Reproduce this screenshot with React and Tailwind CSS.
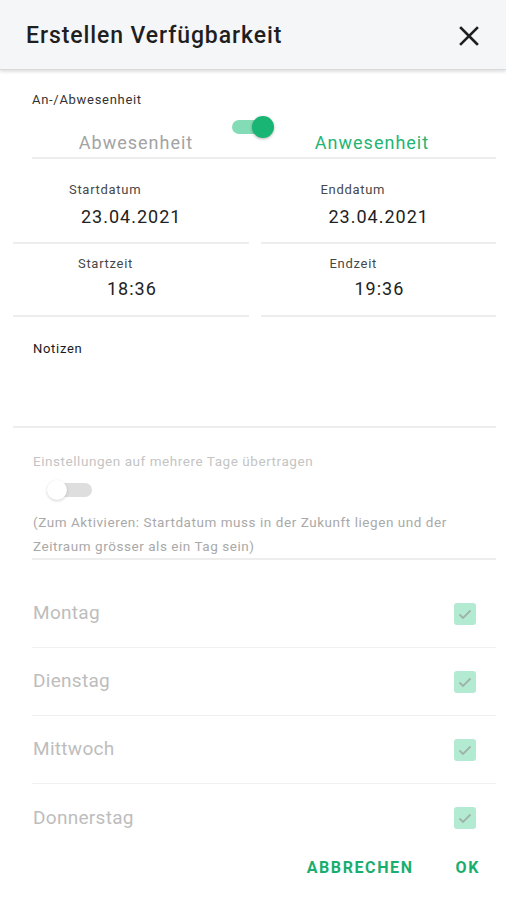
const days = ['Montag', 'Dienstag', 'Mittwoch', 'Donnerstag']

const CloseIcon = () => (
  <svg width="20" height="20" viewBox="0 0 20 20" fill="none">
    <path d="M2 2L18 18M18 2L2 18" stroke="#1f1f1f" strokeWidth="2.6" strokeLinecap="square" />
  </svg>
)

const Check = () => (
  <div className="w-[22px] h-[22px] rounded-[3px] bg-[#b3ead2] flex items-center justify-center">
    <svg width="16" height="16" viewBox="0 0 16 16" fill="none">
      <path d="M2.5 8.5L6 12L13.5 4.5" stroke="#9fb3a9" strokeWidth="1.8" />
    </svg>
  </div>
)

const DateField = ({ label, value, labelPad, valuePad, top, gap, bottom }) => (
  <div className={`border-b-2 border-[#ededed] ${top} ${bottom}`}>
    <div className={`text-[13px] leading-[16px] tracking-[0.7px] text-[#474747] ${labelPad}`}>{label}</div>
    <div className={`text-[18px] leading-[20px] tracking-[1px] text-[#222] ${valuePad} ${gap}`}>{value}</div>
  </div>
)

export default function App() {
  return (
    <div className="h-[900px] w-[506px] bg-white flex flex-col overflow-hidden" style={{ fontFamily: 'Roboto, "Liberation Sans", sans-serif' }}>
      {/* Header */}
      <div className="h-[70px] shrink-0 bg-[#f5f6f8] flex items-center justify-between pl-[26px] pr-[27px] pt-[3px] border-b border-[#d9d9d9] shadow-[0_2px_3px_rgba(0,0,0,0.12)] relative z-10">
        <h1 className="text-[23px] font-medium text-[#1f1f1f] tracking-[0.9px]">Erstellen Verfügbarkeit</h1>
        <CloseIcon />
      </div>

      <div className="flex-1 overflow-hidden">
        {/* An-/Abwesenheit */}
        <div className="ml-[32px] mr-[10px] pt-[22px] pb-[4px] border-b-2 border-[#ededed]">
          <div className="text-[13px] leading-[16px] tracking-[0.7px] text-[#333]">An-/Abwesenheit</div>
          <div className="grid grid-cols-[208px_8px_1fr] mt-[8px]">
            <div className="text-center text-[18px] leading-[20px] tracking-[1px] text-[#a3a3a3] mt-[17px]">Abwesenheit</div>
            <div className="flex justify-center">
              <div className="relative w-[38px] h-[22px] ml-[14px] shrink-0">
                <div className="absolute left-0 top-[4px] w-[36px] h-[14px] rounded-full bg-[#84dcb6]" />
                <div className="absolute right-[-4px] top-0 w-[22px] h-[22px] rounded-full bg-[#18b574] shadow-[0_1px_3px_rgba(0,0,0,0.3)]" />
              </div>
            </div>
            <div className="text-center text-[18px] leading-[20px] tracking-[1px] text-[#1fb574] mt-[17px]">Anwesenheit</div>
          </div>
        </div>

        {/* Dates and times */}
        <div className="grid grid-cols-2 gap-x-[12px] ml-[13px] mr-[10px]">
          <DateField label="Startdatum" value="23.04.2021" labelPad="pl-[56px]" valuePad="pl-[68px]" top="pt-[23px]" gap="mt-[9px]" bottom="pb-[15px]" />
          <DateField label="Enddatum" value="23.04.2021" labelPad="pl-[60px]" valuePad="pl-[68px]" top="pt-[23px]" gap="mt-[9px]" bottom="pb-[15px]" />
          <DateField label="Startzeit" value="18:36" labelPad="pl-[65px]" valuePad="pl-[94px]" top="pt-[12px]" gap="mt-[7px]" bottom="pb-[16px]" />
          <DateField label="Endzeit" value="19:36" labelPad="pl-[69px]" valuePad="pl-[94px]" top="pt-[12px]" gap="mt-[7px]" bottom="pb-[16px]" />
        </div>

        {/* Notizen */}
        <div className="ml-[13px] mr-[10px] pt-[24px] pb-[69px] border-b-2 border-[#ededed]">
          <div className="text-[13px] leading-[16px] tracking-[0.7px] text-[#1a1a1a] pl-[20px]">Notizen</div>
        </div>

        {/* Multi-day */}
        <div className="ml-[32px] mr-[10px] pt-[25px] border-b-2 border-[#ededed]">
          <div className="text-[13.5px] leading-[16px] tracking-[0.55px] text-[#c4c4c4] pl-[1px]">Einstellungen auf mehrere Tage übertragen</div>
          <div className="relative h-[24px] mt-[9px]">
            <div className="absolute left-[26px] top-[5px] w-[34px] h-[14px] rounded-full bg-[#dedede]" />
            <div className="absolute left-[15px] top-[2px] w-[20px] h-[20px] rounded-full bg-white shadow-[0_1px_3px_rgba(0,0,0,0.18)]" />
          </div>
          <div className="text-[13.5px] leading-[24px] tracking-[0.55px] text-[#a9a9a9] mt-[8px] pl-[1px] pr-[20px]">
            (Zum Aktivieren: Startdatum muss in der Zukunft liegen und der Zeitraum grösser als ein Tag sein)
          </div>
        </div>

        {/* Days */}
        <div className="ml-[32px] mr-[10px] mt-[20px]">
          {days.map((day, i) => (
            <div key={day} className={`h-[68px] flex items-center justify-between pr-[20px] ${i < days.length - 1 ? 'border-b border-[#f0f0f0]' : ''}`}>
              <span className="text-[19px] tracking-[0.3px] text-[#bdbdbd] pl-[1px]">{day}</span>
              <Check />
            </div>
          ))}
        </div>
      </div>

      {/* Actions */}
      <div className="shrink-0 h-[55px] bg-white flex items-start justify-end pt-[12px] pr-[26px] gap-[42px]">
        <button className="text-[16px] leading-[22px] font-bold tracking-[1.6px] text-[#1aae6e]">ABBRECHEN</button>
        <button className="text-[16px] leading-[22px] font-bold tracking-[1.6px] text-[#1aae6e]">OK</button>
      </div>
    </div>
  )
}
